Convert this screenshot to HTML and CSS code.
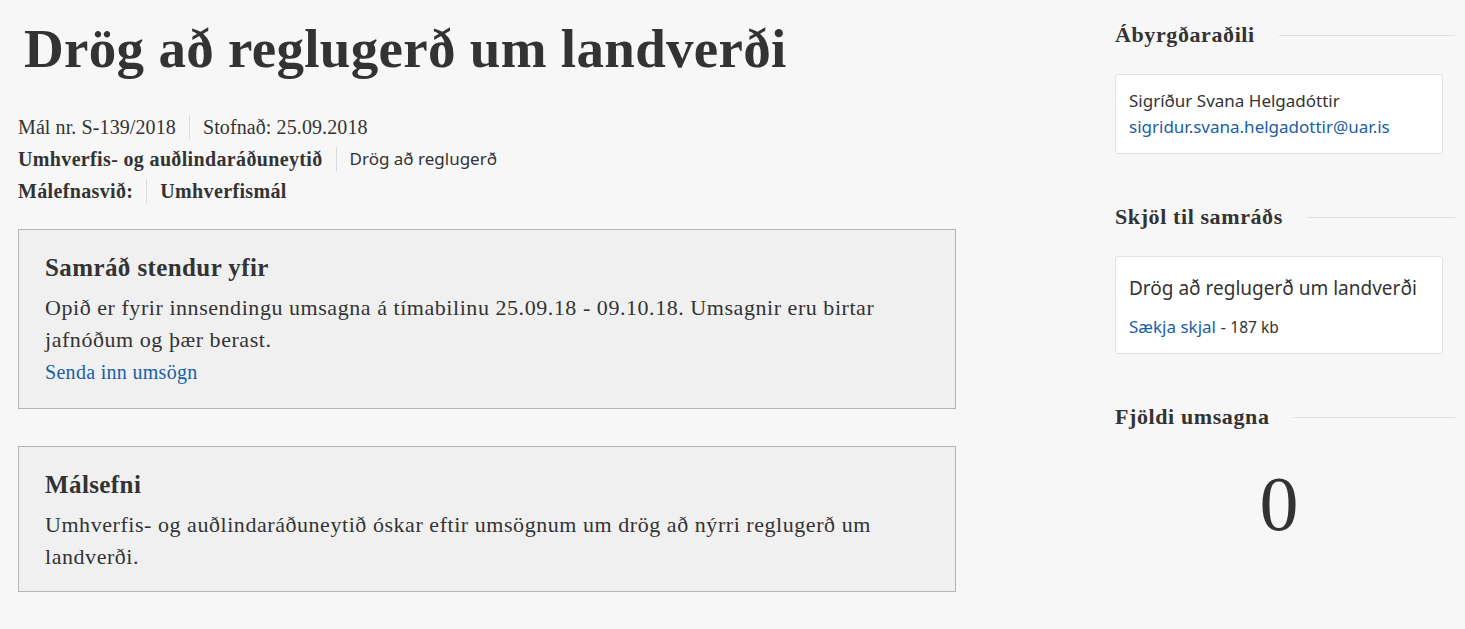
FILE: index.html
```html
<!DOCTYPE html>
<html lang="is">
<head>
    <meta charset="UTF-8">
    <title>Drög að reglugerð um landverði</title>
    <link rel="stylesheet" href="styles.css">
</head>
<body>

    <div class="page">

        <main class="main">

            <h1 class="title">Drög að reglugerð um landverði</h1>

            <div class="meta">
                <p class="meta-row">
                    <span>Mál nr. S-139/2018</span>
                    <span>Stofnað: 25.09.2018</span>
                </p>
                <p class="meta-row">
                    <strong>Umhverfis- og auðlindaráðuneytið</strong>
                    <span class="meta-sans">Drög að reglugerð</span>
                </p>
                <p class="meta-row">
                    <strong>Málefnasvið:</strong>
                    <strong>Umhverfismál</strong>
                </p>
            </div>

            <!-- Staða samráðs -->
            <section class="box">
                <h2>Samráð stendur yfir</h2>
                <p>Opið er fyrir innsendingu umsagna á tímabilinu 25.09.18 - 09.10.18. Umsagnir eru birtar jafnóðum og þær berast.</p>
                <a class="box-link" href="#">Senda inn umsögn</a>
            </section>

            <section class="box">
                <h2>Málsefni</h2>
                <p>Umhverfis- og auðlindaráðuneytið óskar eftir umsögnum um drög að nýrri reglugerð um landverði.</p>
            </section>

        </main>

        <aside class="side">

            <h3 class="side-title"><span>Ábyrgðaraðili</span></h3>
            <div class="card">
                <p>Sigríður Svana Helgadóttir</p>
                <a href="#">sigridur.svana.helgadottir@uar.is</a>
            </div>

            <h3 class="side-title"><span>Skjöl til samráðs</span></h3>
            <div class="card card-doc">
                <p class="doc-name">Drög að reglugerð um landverði</p>
                <p class="doc-link"><a href="#">Sækja skjal</a> - <small>187 kb</small></p>
            </div>

            <h3 class="side-title side-title-count"><span>Fjöldi umsagna</span></h3>
            <div class="count">0</div>

        </aside>

    </div>

</body>
</html>
```

FILE: styles.css
```css
/* Almennt */
html, body { margin: 0; padding: 0; }
body
{
    background-color: #f7f7f7;
    color: #333333;
    font-family: 'Liberation Serif', 'DejaVu Serif', serif;
}
a { color: #1a5ea8; text-decoration: none; }
p { margin: 0; }

.page
{
    display: grid;
    grid-template-columns: 938px 328px;
    column-gap: 159px;
    padding: 0 0 0 18px;
}

/* Aðaldálkur */
.title
{
    font-size: 55px;
    font-weight: 700;
    margin: 18px 0 31px 6px;
    line-height: 62px;
    letter-spacing: 0.3px;
}

.meta { font-size: 20px; line-height: 32px; letter-spacing: 0.1px; }
.meta-row { display: flex; align-items: center; height: 32px; }
.meta-row > * { padding: 0 13px; border-left: 1px solid #dddddd; line-height: 24px; }
.meta-row > *:first-child { padding-left: 0; border-left: none; }
.meta-row strong { letter-spacing: 0.35px; }
.meta-sans { font-family: 'Noto Sans', 'Open Sans', sans-serif; font-size: 17px; letter-spacing: 0; }

.box
{
    background-color: #f0f0f0;
    border: 1px solid #b4b4b4;
    padding: 22px 26px 20px 26px;
    margin-top: 22px;
    margin-bottom: 37px;
    font-size: 22px;
    letter-spacing: 0.55px;
    line-height: 32px;
}
.box + .box { margin-top: 0; padding-bottom: 18px; }
.box h2 { font-size: 25px; letter-spacing: 0.4px; margin: 0 0 8px 0; line-height: 32px; }
.box-link { font-size: 20px; letter-spacing: 0.3px; line-height: 27px; display: inline-block; }

/* Hliðardálkur */
.side { padding-top: 20px; }
.side-title
{
    display: flex;
    align-items: center;
    gap: 24px;
    font-size: 22px;
    letter-spacing: 0.6px;
    margin: 0 -12px 24px 0;
    line-height: 30px;
}
.side-title::after { content: ""; flex: 1; border-top: 1px solid #e0e0e0; }
.side-title-count { margin-top: 4px; }

.card
{
    background-color: #ffffff;
    border: 1px solid #e2e2e2;
    border-radius: 3px;
    padding: 13px 13px 13px 13px;
    font-family: 'Noto Sans', 'Open Sans', sans-serif;
    font-size: 17px;
    line-height: 26px;
    margin-bottom: 48px;
}
.card-doc { padding: 16px 13px 13px 13px; }
.doc-name { font-size: 19px; line-height: 30px; }
.doc-link { font-size: 17px; line-height: 26px; margin-top: 11px; }
.doc-link small { font-size: 15.5px; }

.count
{
    text-align: center;
    font-size: 78px;
    line-height: 90px;
    margin-top: 27px;
}
```
